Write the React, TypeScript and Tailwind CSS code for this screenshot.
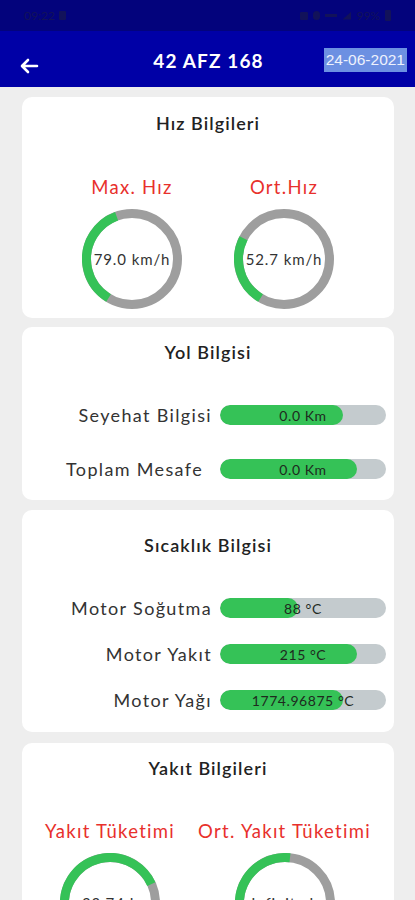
import React from "react";

const F = { fontFamily: "Lato, 'Noto Sans', sans-serif" };

function Gauge({ span, text }: { span: number; text: string }) {
  const r = 45.5;
  const c = 2 * Math.PI * r;
  const len = (span / 360) * c;
  return (
    <div className="relative w-[100px] h-[100px] shrink-0">
      <svg width="100" height="100" viewBox="0 0 100 100" className="absolute inset-0">
        <circle cx="50" cy="50" r={r} fill="none" stroke="#9e9e9e" strokeWidth="9" />
        <circle
          cx="50"
          cy="50"
          r={r}
          fill="none"
          stroke="#35c257"
          strokeWidth="9"
          strokeDasharray={`${len} ${c}`}
          transform="rotate(121 50 50)"
        />
      </svg>
      <div className="absolute inset-0 flex items-center justify-center text-[15px] tracking-[0.06em] text-[#333]">
        {text}
      </div>
    </div>
  );
}

function Bar({ label, value, fill, labelPad }: { label: string; value: string; fill: string; labelPad?: string }) {
  return (
    <div className="flex items-center h-[20px]">
      <div className={`flex-1 text-right text-[18px] tracking-[0.075em] text-[#333] pr-[8px] ${labelPad ?? ""}`}>{label}</div>
      <div className="relative w-[166px] h-[20px] mr-[8px] rounded-full bg-[#c4cbce] overflow-hidden">
        <div className={`h-full rounded-full bg-[#35c257] ${fill}`} />
        <div className="absolute inset-0 flex items-center justify-center text-[14px] tracking-[0.04em] text-[#1e2a1e]">
          {value}
        </div>
      </div>
    </div>
  );
}

export default function App() {
  return (
    <div className="w-[415px] h-[900px] overflow-hidden bg-[#eeeeee]" style={F}>
      {/* status bar */}
      <div className="h-[31px] bg-[#03037c] flex items-center justify-between px-[24px] text-[12px] text-[#12125a]">
        <div className="flex items-center gap-[4px]">
          <span>09:22</span>
          <span className="inline-block w-[7px] h-[9px] rounded-[1px] bg-[#12125a]" />
        </div>
        <div className="flex items-center gap-[5px]">
          <span className="inline-block w-[8px] h-[8px] bg-[#12125a] rounded-[1px]" />
          <span className="inline-block w-[7px] h-[9px] bg-[#12125a] rounded-full" />
          <span className="inline-block w-[12px] h-[3px] bg-[#12125a]" />
          <span className="inline-block w-[9px] h-[8px] bg-[#12125a] [clip-path:polygon(100%_0,100%_100%,0_100%)]" />
          <span>99%</span>
          <span className="inline-block w-[6px] h-[11px] bg-[#12125a] rounded-[1px]" />
        </div>
      </div>
      {/* app bar */}
      <div className="h-[56px] bg-[#0000a6] flex items-center pt-[4px] relative">
        <svg width="24" height="20" viewBox="0 0 24 20" className="absolute left-[17px] top-[25px]">
          <path d="M20 10H6 M11 4 L5 10 L11 16" fill="none" stroke="#ffffff" strokeWidth="2.6" strokeLinecap="round" strokeLinejoin="round" />
        </svg>
        <div className="flex-1 text-center text-white font-bold text-[19px] tracking-[0.06em] pl-[2px]">42 AFZ 168</div>
        <div
          className="absolute right-[8px] top-[17px] h-[24px] px-[2px] flex items-center bg-[#6c90e2] text-[#eef2fd] text-[15.5px]"
          style={{ fontFamily: "'Liberation Sans', Arial, sans-serif" }}
        >
          24-06-2021
        </div>
      </div>

      {/* card 1 */}
      <div className="mt-[10px] ml-[22px] mr-[21px] bg-white rounded-[10px] pt-[14px] pb-[9px]">
        <div className="h-[24px] flex items-center justify-center text-[18px] font-semibold tracking-[0.06em] text-[#222]">Hız Bilgileri</div>
        <div className="mt-[41px] flex justify-center gap-[52px]">
          <div className="flex flex-col items-center">
            <div className="h-[24px] flex items-center text-[18.5px] tracking-[0.07em] text-[#e8302c] whitespace-nowrap">Max. Hız</div>
            <div className="mt-[9px]">
              <Gauge span={129} text="79.0 km/h" />
            </div>
          </div>
          <div className="flex flex-col items-center">
            <div className="h-[24px] flex items-center text-[18.5px] tracking-[0.07em] text-[#e8302c] whitespace-nowrap">Ort.Hız</div>
            <div className="mt-[9px]">
              <Gauge span={86} text="52.7 km/h" />
            </div>
          </div>
        </div>
      </div>

      {/* card 2 */}
      <div className="mt-[9px] ml-[22px] mr-[21px] bg-white rounded-[10px] pt-[13px] pb-[21px]">
        <div className="h-[24px] flex items-center justify-center text-[18px] font-semibold tracking-[0.06em] text-[#222]">Yol Bilgisi</div>
        <div className="mt-[41px]">
          <Bar label="Seyehat Bilgisi" value="0.0 Km" fill="w-[74%]" />
        </div>
        <div className="mt-[34px]">
          <Bar label="Toplam Mesafe" value="0.0 Km" fill="w-[82.5%]" labelPad="pr-[17px]" />
        </div>
      </div>

      {/* card 3 */}
      <div className="mt-[10px] ml-[22px] mr-[21px] bg-white rounded-[10px] pt-[23px] pb-[22px]">
        <div className="h-[24px] flex items-center justify-center text-[18px] font-semibold tracking-[0.06em] text-[#222]">Sıcaklık Bilgisi</div>
        <div className="mt-[41px]">
          <Bar label="Motor Soğutma" value="88 °C" fill="w-[47%]" />
        </div>
        <div className="mt-[26px]">
          <Bar label="Motor Yakıt" value="215 °C" fill="w-[82.5%]" />
        </div>
        <div className="mt-[26px]">
          <Bar label="Motor Yağı" value="1774.96875 °C" fill="w-[74%]" />
        </div>
      </div>

      {/* card 4 */}
      <div className="mt-[11px] ml-[22px] mr-[21px] bg-white rounded-[10px] pt-[13px] pb-[20px]">
        <div className="h-[24px] flex items-center justify-center text-[18px] font-semibold tracking-[0.06em] text-[#222]">Yakıt Bilgileri</div>
        <div className="mt-[40px] flex justify-evenly">
          <div className="flex flex-col items-center">
            <div className="h-[24px] flex items-center text-[18.5px] tracking-[0.07em] text-[#e8302c] whitespace-nowrap">Yakıt Tüketimi</div>
            <div className="mt-[9px]">
              <Gauge span={214} text="33.74 L" />
            </div>
          </div>
          <div className="flex flex-col items-center">
            <div className="h-[24px] flex items-center text-[18.5px] tracking-[0.07em] text-[#e8302c] whitespace-nowrap">Ort. Yakıt Tüketimi</div>
            <div className="mt-[9px]">
              <Gauge span={155} text="Infinity L" />
            </div>
          </div>
        </div>
      </div>
    </div>
  );
}
